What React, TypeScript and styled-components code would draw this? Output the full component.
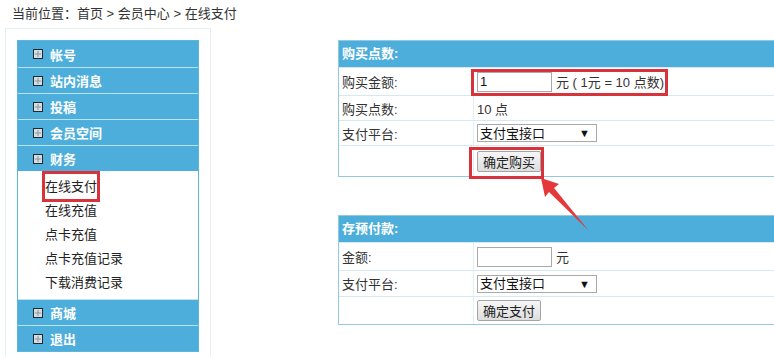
import styled, { createGlobalStyle } from "styled-components";

const GlobalStyle = createGlobalStyle`
  html, body {
    margin: 0;
    padding: 0;
    background: #fff;
    overflow: hidden;
  }
  body {
    font-family: "Liberation Sans", "Noto Sans CJK SC", sans-serif;
    font-size: 13px;
    color: #333;
  }
`;

const menuTop = ["帐号", "站内消息", "投稿", "会员空间", "财务"];
const subMenu = ["在线支付", "在线充值", "点卡充值", "点卡充值记录", "下载消费记录"];
const menuBottom = ["商城", "退出"];

function PlusIcon() {
  return (
    <svg width="10" height="10" viewBox="0 0 10 10">
      <rect x="0.5" y="0.5" width="9" height="9" fill="#d7dde0" stroke="#1c2a33" />
      <line x1="5" y1="2" x2="5" y2="8" stroke="#8a969c" />
      <line x1="2" y1="5" x2="8" y2="5" stroke="#8a969c" />
    </svg>
  );
}

function Arrow() {
  return (
    <ArrowLayer width="60" height="60" viewBox="0 0 60 60">
      <polygon points="1,1 19,7 14,11 49,54 9,15 5,20" fill="#e5383b" />
    </ArrowLayer>
  );
}

function PlatformSelect() {
  return (
    <SelectBox>
      <Select defaultValue="alipay">
        <option value="alipay">支付宝接口</option>
      </Select>
      <Caret>▼</Caret>
    </SelectBox>
  );
}

function App() {
  return (
    <Page>
      <GlobalStyle />
      <Crumb>当前位置：首页 &gt; 会员中心 &gt; 在线支付</Crumb>
      <Main>
        <SideFrame>
          <Menu>
            {menuTop.map((m) => (
              <MenuHead key={m}>
                <PlusIcon />
                {m}
              </MenuHead>
            ))}
            <SubList>
              {subMenu.map((s, i) => (
                <SubItem key={s}>
                  {i === 0 ? (
                    <Mark $t={4} $r={3} $b={3} $l={3}>
                      {s}
                    </Mark>
                  ) : (
                    s
                  )}
                </SubItem>
              ))}
            </SubList>
            {menuBottom.map((m) => (
              <MenuHead key={m}>
                <PlusIcon />
                {m}
              </MenuHead>
            ))}
          </Menu>
        </SideFrame>
        <Content>
          <Box>
            <BoxHead>购买点数:</BoxHead>
            <Row $h={27}>
              <Label>购买金额:</Label>
              <Value>
                <Mark $t={3} $r={4} $b={4} $l={6}>
                  <Input defaultValue="1" />
                  <Unit>元 ( 1元 = 10 点数)</Unit>
                </Mark>
              </Value>
            </Row>
            <Row $h={24}>
              <Label>购买点数:</Label>
              <Value>10 点</Value>
            </Row>
            <Row $h={24}>
              <Label>支付平台:</Label>
              <Value>
                <PlatformSelect />
              </Value>
            </Row>
            <Row $h={30}>
              <Label />
              <Value>
                <Mark $t={4} $r={3} $b={7} $l={8}>
                  <Button>确定购买</Button>
                </Mark>
              </Value>
            </Row>
          </Box>
          <Box>
            <BoxHead>存预付款:</BoxHead>
            <Row $h={27}>
              <Label>金额:</Label>
              <Value>
                <Input />
                <Unit>元</Unit>
              </Value>
            </Row>
            <Row $h={25}>
              <Label>支付平台:</Label>
              <Value>
                <PlatformSelect />
              </Value>
            </Row>
            <Row $h={27}>
              <Label />
              <Value>
                <Button>确定支付</Button>
              </Value>
            </Row>
          </Box>
        </Content>
      </Main>
      <Arrow />
    </Page>
  );
}

const Page = styled.div`
  position: relative;
  width: 774px;
  height: 357px;
  overflow: hidden;
`;

const Crumb = styled.div`
  height: 28px;
  line-height: 28px;
  padding-left: 12px;
  color: #333;
`;

const Main = styled.div`
  display: flex;
  align-items: flex-start;
`;

const SideFrame = styled.div`
  box-sizing: border-box;
  flex: none;
  margin-left: 5px;
  width: 206px;
  height: 329px;
  padding: 11px 0 0 11px;
  border: 1px solid #e6eff2;
  border-bottom: none;
`;

const Menu = styled.div`
  width: 180px;
  border: 1px solid #5cb6dc;
  background: #fff;
`;

const MenuHead = styled.div`
  display: flex;
  align-items: center;
  gap: 7px;
  height: 25px;
  padding-left: 15px;
  background: #4daedb;
  color: #fff;
  font-weight: bold;
  border-top: 1px solid #b8e4f4;
  &:first-child {
    border-top: none;
    height: 26px;
  }
`;

const SubList = styled.div`
  padding: 4px 0 4px 27px;
`;

const SubItem = styled.div`
  height: 24px;
  line-height: 24px;
  color: #222;
`;

const Mark = styled.span<{ $t: number; $r: number; $b: number; $l: number }>`
  position: relative;
  display: inline-flex;
  align-items: center;
  &::after {
    content: "";
    position: absolute;
    top: -${(p) => p.$t}px;
    right: -${(p) => p.$r}px;
    bottom: -${(p) => p.$b}px;
    left: -${(p) => p.$l}px;
    border: 3px solid #d8333b;
    pointer-events: none;
  }
`;

const Content = styled.div`
  flex: none;
  margin-left: 127px;
  margin-top: 12px;
  display: flex;
  flex-direction: column;
  gap: 38px;
`;

const Box = styled.div`
  width: 520px;
  border: 1px solid #93c9df;
`;

const BoxHead = styled.div`
  height: 26px;
  line-height: 26px;
  padding-left: 3px;
  background: #4daedb;
  color: #fff;
  font-weight: bold;
`;

const Row = styled.div<{ $h: number }>`
  display: flex;
  height: ${(p) => p.$h}px;
  border-top: 1px solid #d5e9f1;
`;

const Label = styled.div`
  width: 131px;
  padding-left: 3px;
  display: flex;
  align-items: center;
  border-right: 1px solid #e2eff4;
`;

const Value = styled.div`
  flex: 1;
  display: flex;
  align-items: center;
  padding-left: 3px;
`;

const Input = styled.input`
  box-sizing: border-box;
  width: 75px;
  height: 20px;
  margin: 0;
  padding: 0 2px;
  border: 1px solid #a9a9a9;
  font: inherit;
  color: #111;
`;

const Unit = styled.span`
  margin-left: 4px;
`;

const SelectBox = styled.span`
  position: relative;
  display: inline-block;
  height: 18px;
`;

const Select = styled.select`
  box-sizing: border-box;
  width: 120px;
  height: 18px;
  margin: 0;
  padding: 0 2px;
  border: 1px solid #a9a9a9;
  border-radius: 0;
  background: #fff;
  appearance: none;
  font: inherit;
  color: #111;
`;

const Caret = styled.span`
  position: absolute;
  right: 7px;
  top: 2px;
  font-size: 11px;
  line-height: 14px;
  color: #111;
  pointer-events: none;
`;

const Button = styled.button`
  box-sizing: border-box;
  width: 64px;
  height: 21px;
  margin: 0;
  padding: 0;
  border: 1px solid #a4a4a4;
  border-radius: 2px;
  background: linear-gradient(#f6f6f6, #dedede);
  font: inherit;
  color: #222;
`;

const ArrowLayer = styled.svg`
  position: absolute;
  left: 540px;
  top: 177px;
  pointer-events: none;
`;

export default App;
